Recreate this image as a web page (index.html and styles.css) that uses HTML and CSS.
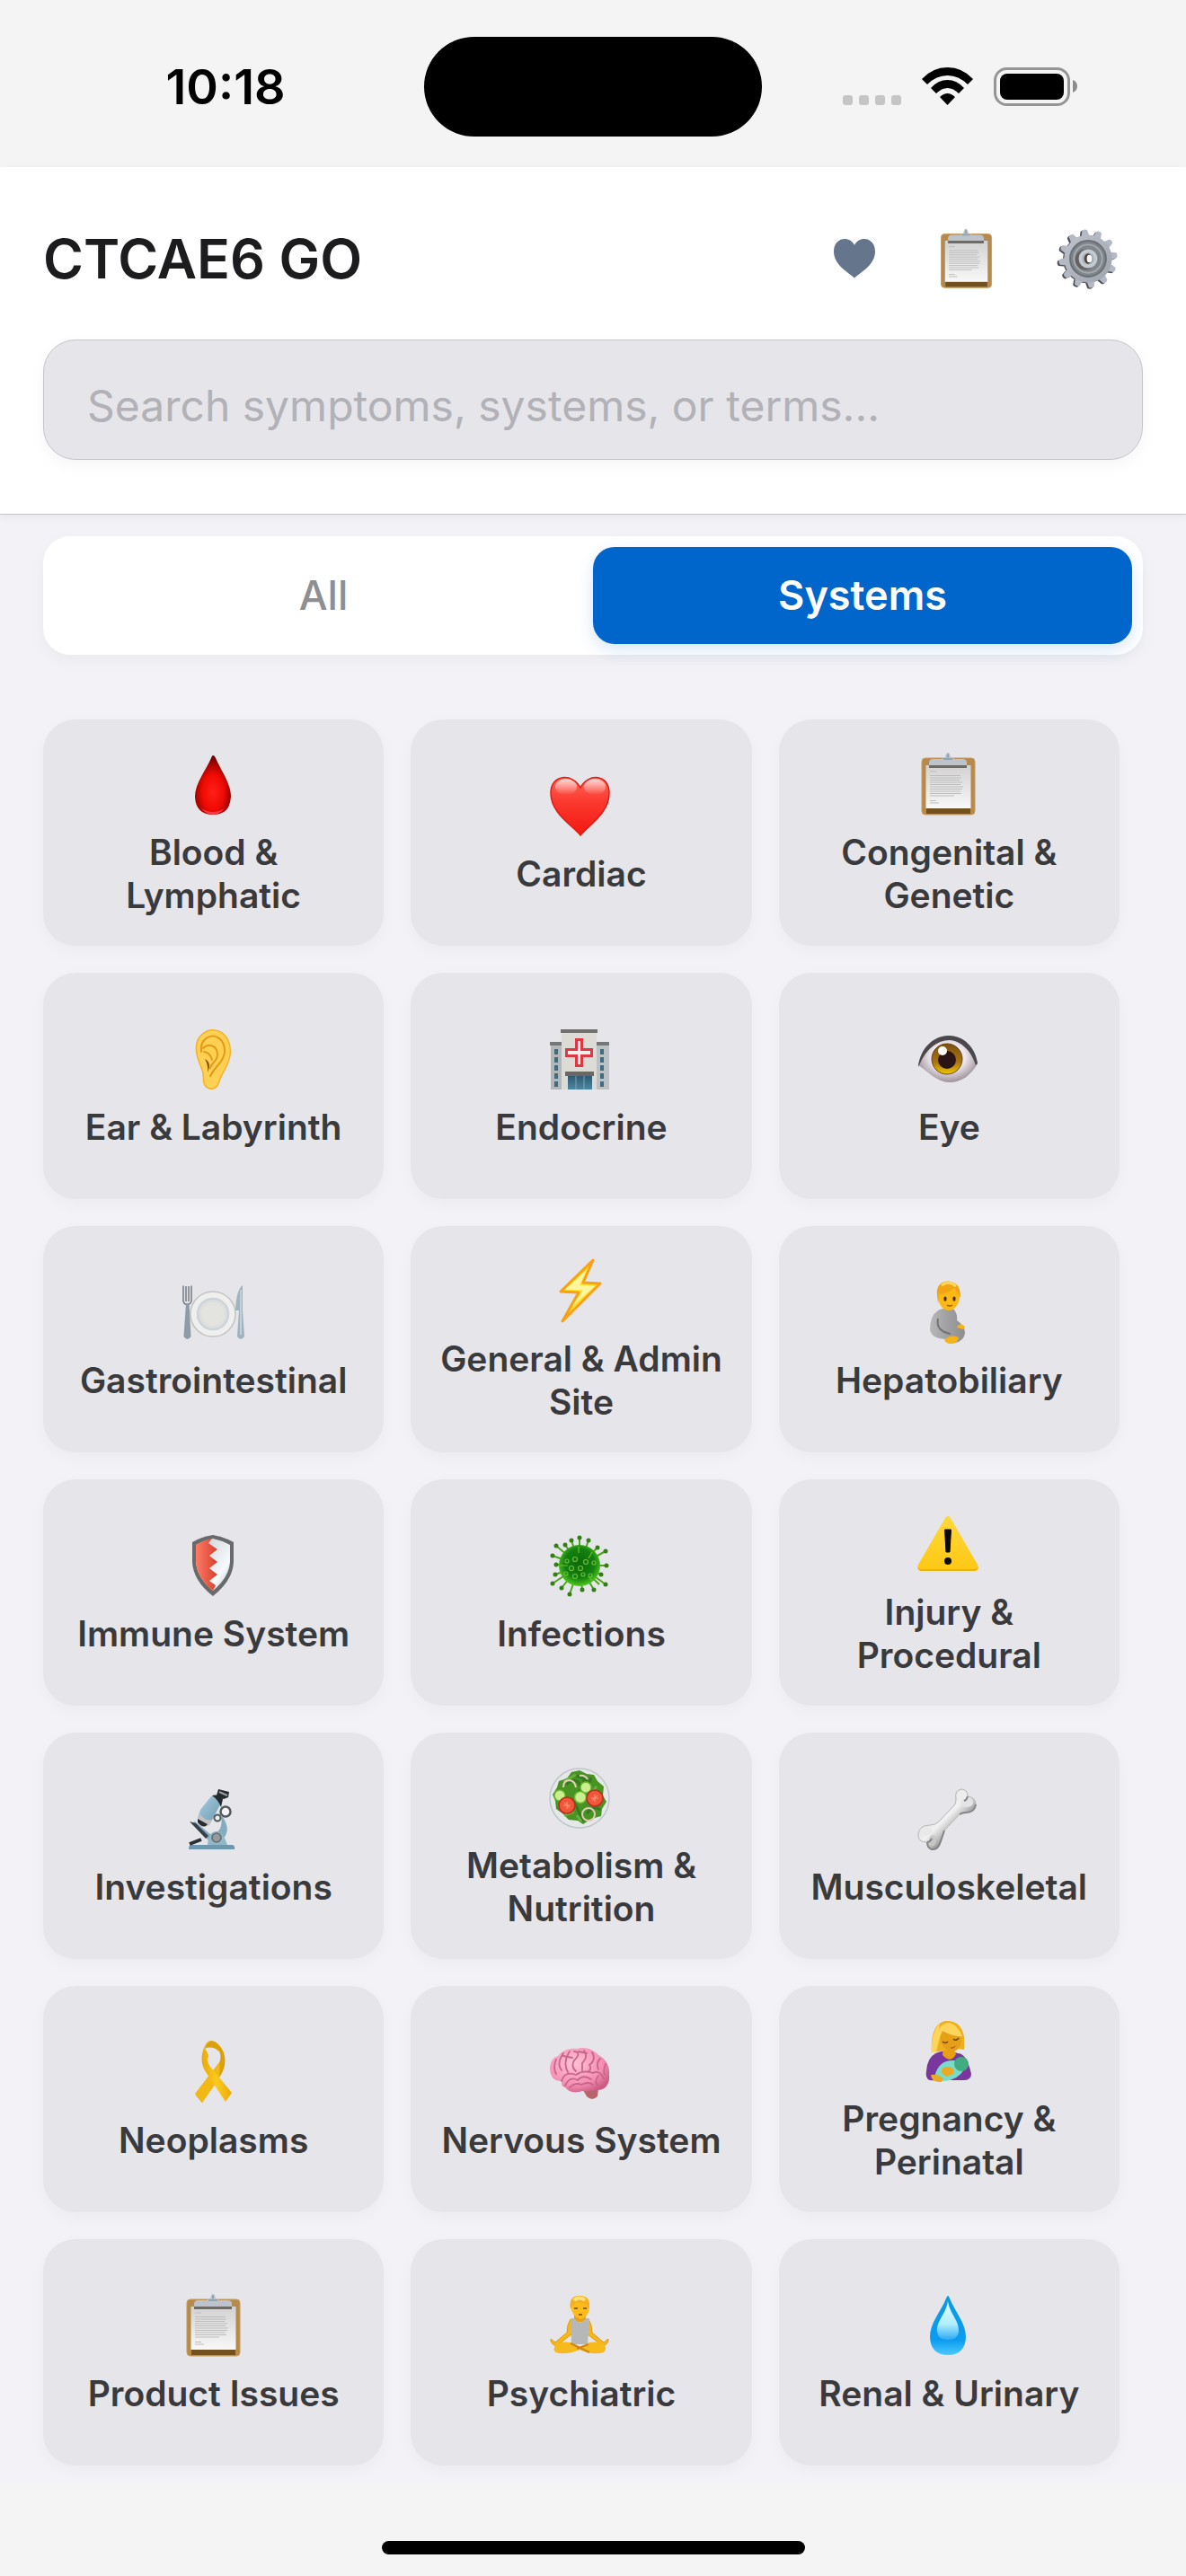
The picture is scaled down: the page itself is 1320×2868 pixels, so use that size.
FILE: index.html
```html
<!DOCTYPE html>
<html lang="en">
<head>
<meta charset="utf-8">
<meta name="viewport" content="width=device-width, initial-scale=1">
<title>CTCAE6 GO</title>
<link rel="stylesheet" href="styles.css">
</head>
<body>
<svg class="sprite" aria-hidden="true">
  <defs>
    <radialGradient id="g-blood" cx=".5" cy=".62" r=".6"><stop offset="0" stop-color="#ff2018"/><stop offset=".5" stop-color="#f00a04"/><stop offset="1" stop-color="#6c0000"/></radialGradient>
    <linearGradient id="g-heart" x2="0" y2="1"><stop offset="0" stop-color="#ff6a5c"/><stop offset=".4" stop-color="#fb3a30"/><stop offset="1" stop-color="#f3180f"/></linearGradient>
    <linearGradient id="g-shine" x2="0" y2="1"><stop offset="0" stop-color="#fff" stop-opacity=".75"/><stop offset="1" stop-color="#fff" stop-opacity="0"/></linearGradient>
    <linearGradient id="g-paper" x2="0" y2="1"><stop offset="0" stop-color="#d2d2d2"/><stop offset="1" stop-color="#f8f8f8"/></linearGradient>
    <linearGradient id="g-ribbon" x2="1" y2="0"><stop offset="0" stop-color="#e8a80c"/><stop offset=".5" stop-color="#fcca1e"/><stop offset="1" stop-color="#eaa908"/></linearGradient>
    <linearGradient id="g-warn" x2="0" y2="1"><stop offset="0" stop-color="#ffd83a"/><stop offset="1" stop-color="#ffc814"/></linearGradient>
    <linearGradient id="g-steel" x2="1" y2="1"><stop offset="0" stop-color="#bfc3cb"/><stop offset="1" stop-color="#9da3ae"/></linearGradient>
    <linearGradient id="g-glass" x2="0" y2="1"><stop offset="0" stop-color="#2f5a72"/><stop offset="1" stop-color="#4d87a3"/></linearGradient>
    <radialGradient id="g-eye" cx=".5" cy=".45" r=".6"><stop offset="0" stop-color="#fff"/><stop offset=".5" stop-color="#ece6ec"/><stop offset="1" stop-color="#8f8088"/></radialGradient>
    <linearGradient id="g-iris" x2="0" y2="1"><stop offset="0" stop-color="#7b5212"/><stop offset=".6" stop-color="#a87210"/><stop offset="1" stop-color="#f0c800"/></linearGradient>
    <linearGradient id="g-red" x2="1" y2="0"><stop offset="0" stop-color="#ff7a66"/><stop offset="1" stop-color="#d6402c"/></linearGradient>
    <linearGradient id="g-silver" x2="1" y2="1"><stop offset="0" stop-color="#c8ccd0"/><stop offset=".7" stop-color="#f6fafc"/><stop offset="1" stop-color="#b4bcc4"/></linearGradient>
    <radialGradient id="g-virus" cx=".5" cy=".45" r=".55"><stop offset="0" stop-color="#0e6a08"/><stop offset=".65" stop-color="#128010"/><stop offset="1" stop-color="#52c81c"/></radialGradient>
    <linearGradient id="g-scope" x2="1" y2="1"><stop offset="0" stop-color="#a8cfe2"/><stop offset="1" stop-color="#6c96ac"/></linearGradient>
    <linearGradient id="g-bone" gradientUnits="userSpaceOnUse" x1="28" y1="30" x2="50" y2="52"><stop offset="0" stop-color="#e2e2e2"/><stop offset=".4" stop-color="#f2f2f2"/><stop offset=".7" stop-color="#c4c4c4"/><stop offset="1" stop-color="#858585"/></linearGradient>
    <radialGradient id="g-brain" cx=".4" cy=".35" r=".7"><stop offset="0" stop-color="#ffc4d8"/><stop offset=".7" stop-color="#f48eb2"/><stop offset="1" stop-color="#cc5c84"/></radialGradient>
    <linearGradient id="g-shirt" x2="1" y2="0"><stop offset="0" stop-color="#b8b8ba"/><stop offset=".5" stop-color="#a0a0a2"/><stop offset="1" stop-color="#8e8e90"/></linearGradient>
    <linearGradient id="g-water" x2="0" y2="1"><stop offset="0" stop-color="#0a9ae4"/><stop offset=".75" stop-color="#0c9cf0"/><stop offset="1" stop-color="#4ccaff"/></linearGradient>
    <linearGradient id="g-waterlight" x2="0" y2="1"><stop offset="0" stop-color="#e4ffff"/><stop offset=".6" stop-color="#b0eeff"/><stop offset="1" stop-color="#2aaaf4"/></linearGradient>
    <path id="tooth" d="M35.500 13L37 6.500Q40 4.500 43 6.500L44.500 13Z"/>
    <g id="teeth">
      <use href="#tooth"/><use href="#tooth" transform="rotate(30 40 40)"/><use href="#tooth" transform="rotate(60 40 40)"/><use href="#tooth" transform="rotate(90 40 40)"/><use href="#tooth" transform="rotate(120 40 40)"/><use href="#tooth" transform="rotate(150 40 40)"/><use href="#tooth" transform="rotate(180 40 40)"/><use href="#tooth" transform="rotate(210 40 40)"/><use href="#tooth" transform="rotate(240 40 40)"/><use href="#tooth" transform="rotate(270 40 40)"/><use href="#tooth" transform="rotate(300 40 40)"/><use href="#tooth" transform="rotate(330 40 40)"/>
    </g>
  </defs>

  <symbol id="blood" viewBox="0 0 80 80"><path d="M39 8Q41 8 42 11C48 25 59 39 59 54Q58 74 39 74Q20 74 19 54C19 39 31 25 37 11Q38 8 39 8Z" fill="url(#g-blood)"/><path d="M26 67Q39 75 52 67Q46 74 39 74Q32 74 26 67Z" fill="#ff3a48"/></symbol>

  <symbol id="heart" viewBox="0 0 80 80"><path d="M39 73C29 61 6 48 6 26C6 5 30 3 39 20C48 3 71 5 71 26C71 48 49 61 39 73Z" fill="url(#g-heart)" stroke="#dd1c14" stroke-width="1.500"/><ellipse cx="23" cy="19" rx="12" ry="9" fill="url(#g-shine)"/><ellipse cx="55" cy="19" rx="12" ry="9" fill="url(#g-shine)"/></symbol>

  <symbol id="clipboard" viewBox="0 0 80 80">
    <rect x="10" y="11" width="59" height="63" rx="4" fill="#b58a4c" stroke="#c79c60"/>
    <path d="M15 67h49v6H15z" fill="#73501f"/><path d="M14.500 19h50v48h-50z" fill="url(#g-paper)"/>
    <path d="M18 19h42v3H18z" fill="#6e6a66"/>
    <path d="M18 19v-3q0-4 5-4h9l4-2q1-5 3-5t3 5l4 2h9q5 0 5 4v3z" fill="#bcc3ca"/><path d="M34 12h10M39 6.500v4" stroke="#8fa3b0" stroke-width="2"/>
    <path d="M19 26h7M19 30.500h34M19 33h35M19 35.500h33M19 38h36M19 40.500h34M19 43h37M19 45.500h36M19 48h34M19 50.500h35M19 53h27M19 58.500h7M19 61h10" stroke="#bdbdbd"/>
  </symbol>

  <symbol id="gear" viewBox="0 0 80 80">
    <g transform="rotate(-7 40 40)"><use href="#teeth" x="-2" y="1" fill="#4b4c52"/><circle cx="38.500" cy="40.500" r="28" fill="#55575e"/><use href="#teeth" fill="#b4bac5"/></g>
    <circle cx="40" cy="40" r="28" fill="url(#g-steel)"/><circle cx="40" cy="40" r="21" fill="#7e868c" stroke="#686f76" stroke-width="2"/><circle cx="40" cy="40" r="16.500" fill="none" stroke="#a4abb0" stroke-width="2"/><circle cx="37" cy="41" r="12" fill="#66605f"/><circle cx="40" cy="40" r="11" fill="#c2cad2"/><circle cx="40" cy="40" r="7" fill="#a7b0ba"/><ellipse cx="40" cy="40" rx="4.500" ry="6" fill="#4e4033"/><ellipse cx="41.500" cy="40" rx="3" ry="4.500" fill="#fff"/>
  </symbol>

  <symbol id="ear" viewBox="0 0 80 80"><path d="M21 34C17 14 33 7 41 8C53 9 60 22 58 36C56 50 48 56 46 65C44 72 39 75 33 72C27 69 29 62 28 56C27 49 22 43 21 34Z" fill="#ffd052" stroke="#f2b229" stroke-width="1.500"/><path d="M26 32C24 17 37 12 44 16C52 20 54 31 50 39C47 46 41 49 36 59M28 28C34 22 44 25 44 35C44 43 38 43 36 50M29 32Q36 33 38 41" fill="none" stroke="#e39a1a" stroke-width="2" stroke-linecap="round"/><path d="M30 40Q38 44 33 55Q34 47 30 40Z" fill="#8d4b04"/></symbol>

  <symbol id="hospital" viewBox="0 0 80 80">
    <path d="M6 24h14v50H6z" fill="#b4b7b7"/><path d="M57 24h14v50H57z" fill="#bcc2c4"/><path d="M5 21h14v4H5zM57 21h14v4H57z" fill="#777"/>
    <path d="M18 10h39v64H18z" fill="#dcdbd6"/><path d="M17 7h41v4H17z" fill="#716f6d"/>
    <path d="M10 29h4v6h-4zM10 38h4v6h-4zM10 47h4v6h-4zM10 56h4v6h-4zM10 65h4v6h-4zM61 29h4v6h-4zM61 38h4v6h-4zM61 47h4v6h-4zM61 56h4v6h-4zM61 65h4v6h-4z" fill="#416b80"/>
    <path d="M34.500 18.500h6v11h11v7h-11v11h-6v-11h-11v-7h11z" fill="#efeded" stroke="#e03842" stroke-width="3"/>
    <path d="M22 54h32v5H22z" fill="#6a6764"/><path d="M25 59h27v15H25z" fill="url(#g-glass)"/><path d="M34 59v15M43 59v15" stroke="#7fa6b6"/>
  </symbol>

  <symbol id="eye" viewBox="0 0 80 80"><path d="M6 47C10 27 25 14 40 14C56 14 68 26 72 45C65 58 54 66 41 66C27 66 17 54 6 47Z" fill="url(#g-eye)"/><path d="M6 49C8 28 23 14 40 14C57 14 70 28 72 45L70 47C65 31 54 20 41 19C26 19 14 31 8 45Z" fill="#4a484c"/><circle cx="38" cy="40" r="17" fill="url(#g-iris)" stroke="#664310"/><circle cx="38" cy="41" r="10" fill="#2a1516"/><circle cx="33" cy="31" r="5" fill="#fff"/></symbol>

  <symbol id="plate" viewBox="0 0 80 80"><circle cx="39" cy="42" r="25" fill="#efefee" stroke="#c2c4c4" stroke-width="1.500"/><circle cx="39" cy="42" r="17" fill="#dedfdc" stroke="#ccd3da" stroke-width="2.500"/><circle cx="39" cy="42" r="13" fill="#e3e3df"/><path d="M6 10.500v17q1 4 4.500 4q4-1 4.500-4v-17M9 11v17M12 11v17" fill="none" stroke="#747a82" stroke-width="1.500"/><path d="M9 30h3.500l2 37q-4 6-8 0z" fill="#8d9ba8"/><path d="M72 10Q65 15 64 38H68L66 67Q70 73 74 67L72 38Z" fill="#9fb4be"/><path d="M70 15v50" stroke="#ccdbe1" stroke-width="1.500"/></symbol>

  <symbol id="bolt" viewBox="0 0 80 80"><path d="M53 6L17 41L37 42L19 74L61 32L42 31Z" fill="#ffe02e" stroke="#f8a016" stroke-width="3" stroke-linejoin="round"/><path d="M46 17L22 38.500L42 39.500L30 57L55 35L38 34Z" fill="#fff7a0"/></symbol>

  <symbol id="pregnant" viewBox="0 0 80 80"><path d="M28 38Q35 34 46 37Q50 43 49 49Q58 55 58 63Q57 72 47 74Q39 76 36 70Q20 69 19 59Q19 44 28 38Z" fill="url(#g-shirt)"/><path d="M28 47Q25 61 42 64" fill="none" stroke="#747477" stroke-width="2"/><ellipse cx="40" cy="22" rx="12" ry="16" fill="#fbb917"/><path d="M27 21C25 6 38 3 45 7Q53 9 53 24Q49 17 46 13Q39 20 29 20L28 31Z" fill="#f2a512"/><path d="M32 10Q40 4 48 11" fill="none" stroke="#ffd75a" stroke-width="3"/><path d="M36 24v2M46 24v2" stroke="#4b2a08" stroke-width="3" stroke-linecap="round"/><path d="M38 32q3 2 6 0" fill="none" stroke="#984810" stroke-width="1.500"/><path d="M35 71Q42 64 51 68Q50 75 42 75Q37 75 35 71ZM49 57Q52 50 58 56L56 59Z" fill="#f6b419"/></symbol>

  <symbol id="shield" viewBox="0 0 80 80"><path d="M39 6Q52 8 62 14V36Q61 57 39 74Q17 57 16 36V14Q26 8 39 6Z" fill="#686a6c"/><path d="M39 10Q49 12 58 17V36Q57 53 39 68Q21 53 20 36V17Q29 12 39 10Z" fill="url(#g-silver)"/><path d="M38 10L34 15L44 22L35 29L44 36L35 43L44 50L35 57L42 62L39 68Q21 53 20 36V17Q29 12 38 10Z" fill="url(#g-red)"/></symbol>

  <symbol id="virus" viewBox="0 0 80 80">
    <path d="M38 40V9M38 40L29 12M38 40L48 12M38 40L22 17M38 40L12 18M38 40L58 20M38 40L67 24M38 40L8 29M38 40L68 40M38 40L12 39M38 40L11 50M38 40L62 50M38 40L67 61M38 40L8 60M38 40L18 65M38 40L27 72M38 40L41 67M38 40L54 67M38 40L60 61" stroke="#49a51a" stroke-width="2" fill="none"/>
    <path d="M38 9h0M29 12h0M48 12h0M22 17h0M12 18h0M58 20h0M67 24h0M8 29h0M68 40h0M12 39h0M11 50h0M62 50h0M67 61h0M8 60h0M18 65h0M27 72h0M41 67h0M54 67h0" stroke="#337f14" stroke-width="5" stroke-linecap="round"/>
    <circle cx="38" cy="40" r="23" fill="url(#g-virus)"/><g fill="none" stroke="#6cbc3c" stroke-width="1.200"><circle cx="33" cy="33" r="2.500"/><circle cx="45" cy="36" r="2.500"/><circle cx="29" cy="43" r="2.500"/><circle cx="39" cy="43" r="2.500"/><circle cx="33" cy="52" r="2.500"/><circle cx="42" cy="50" r="2"/><circle cx="54" cy="37" r="2"/><circle cx="24" cy="35" r="2"/><circle cx="23" cy="49" r="2"/><circle cx="50" cy="51" r="2"/><path d="M37 19v7M48 32l4-7M16 40h9M52 57l-4-5"/></g>
  </symbol>

  <symbol id="warning" viewBox="0 0 80 80"><path d="M36 11Q39 7 42 11L72 63Q75 70 68 70H10Q3 70 6 63Z" fill="url(#g-warn)"/><path d="M6 66Q6 70 10 70H68Q72 70 73 66Q71 68 68 68H10Q7 68 6 66Z" fill="#edb210"/><path d="M35.500 24h7l-1.500 25h-4z" fill="#0a0a0a" stroke="#0a0a0a" stroke-linejoin="round"/><circle cx="39" cy="59" r="4" fill="#0a0a0a"/></symbol>

  <symbol id="microscope" viewBox="0 0 80 80"><path d="M50 38Q61 55 47 65H35L16 45L19 43L36 57Q51 56 48 38Z" fill="#83adbf"/><path d="M13 43L20 45L34 59L31 62Z" fill="#354048"/><path d="M37 15Q46 12 50 19L36 45Q31 50 22 39L25 30Z" fill="url(#g-scope)"/><path d="M24 34Q30 43 38 41L35 47Q29 51 22 41Z" fill="#c2c2c2"/><path d="M22 40L33 46L31 48Q27 50 22 44Z" fill="#292c2e"/><path d="M38 14Q46 12 50 18L48 27Q45 19 38 14ZM45 7L57 10L56 16L51 18L43 14Z" fill="#242a2e"/><path d="M46 10l9 4" stroke="#9aa0a4" stroke-width="2"/><circle cx="53" cy="32" r="5.500" fill="#f4f4f4" stroke="#50585c" stroke-width="2.500"/><circle cx="44" cy="39" r="3.500" fill="#eee" stroke="#50585c" stroke-width="2"/><path d="M33 69Q34 54 43 54Q50 54 55 69Z" fill="#91b8c8"/><circle cx="43" cy="61" r="5" fill="#98999a" stroke="#636b70" stroke-width="1.500"/><path d="M14 69H61Q64 70 63 74H12Q12 70 14 69Z" fill="#6e98ad"/><path d="M13 68l13-5" stroke="#2c3032" stroke-width="4"/></symbol>

  <symbol id="salad" viewBox="0 0 80 80"><circle cx="38" cy="41" r="33" fill="#e5e8e8" stroke="#bfc6c7" stroke-width="1.500"/><path d="M29 12L38 10L46 14L54 15L58 22L65 28L64 38L68 45L63 53L62 61L51 64L42 70L36 66L26 65L19 58L12 53L11 44L8 37L13 29L15 22L24 19Z" fill="#489422"/><path d="M23 26Q34 16 39 27T51 18M18 46Q29 36 35 51T44 66M46 43Q56 52 60 42M27 18Q37 13 47 23M46 58Q55 48 61 54M36 35Q43 29 43 20" fill="none" stroke="#357a1e" stroke-width="3"/><path d="M20 22L34 15M57 28L50 37M21 60L32 56M35 60l5 7" stroke="#6bb03c" stroke-width="3"/><g fill="#c9ef8e" stroke="#6fb535" stroke-width="1.500"><circle cx="16" cy="38" r="6"/><circle cx="39" cy="40" r="6.500"/><circle cx="45" cy="29" r="6"/></g><g fill="#ef563a" stroke="#ba2c1c" stroke-width="1.500"><circle cx="24" cy="49" r="9"/><circle cx="55" cy="41" r="9"/></g><path d="M24 45v8M20 49h8M21 46l6 6M55 37v8M51 41h8M52 44l6-6" stroke="#ff9c7c"/><path d="M20 29Q20 21 27 21Q33 22 34 29M38 16Q44 15 47 20" fill="none" stroke="#e6cfc0" stroke-width="2"/><circle cx="48" cy="59" r="7" fill="none" stroke="#e2c8bc" stroke-width="2"/></symbol>

  <symbol id="bone" viewBox="0 0 80 80"><path d="M48 18Q46 8 54 7Q61 7 61 15Q70 16 70 24Q69 33 59 33Q55 33 52 35L35 53Q34 57 31 65Q28 75 21 74Q16 72 16 66Q5 66 6 57Q7 47 19 47Q25 47 29 43L46 25Q48 22 48 18Z" fill="url(#g-bone)" stroke="#b6b6b6"/><ellipse cx="54" cy="14" rx="5" ry="5" fill="#ededed"/><ellipse cx="60" cy="22" rx="7" ry="5" fill="#e4e4e4"/><ellipse cx="15" cy="54" rx="7" ry="5" fill="#e9e9e9"/><ellipse cx="22" cy="64" rx="4" ry="6" fill="#c6c6c6"/><path d="M16 66Q16 72 21 74Q28 75 31 65L35 53M16 66Q19 66 21 62M70 24Q69 33 59 33Q55 33 52 35M61 15Q60 19 57 20" fill="none" stroke="#858585" stroke-width="2"/></symbol>

  <symbol id="ribbon" viewBox="0 0 80 80"><path d="M30 14Q38 10 46 17Q49 22 46 30L20 66L27 74L48 43Q55 31 51 18Q46 7 38 5Q32 5 30 14Z" fill="#dca008"/><path d="M19 64L46 29Q47 36 46 47L27 74Z" fill="#f2b916"/><path d="M30 14Q34 18 34 23Q31 26 36 34L60 63L53 73L31 40Q24 29 28 16Q31 6 36 5Q31 9 30 14Z" fill="url(#g-ribbon)"/></symbol>

  <symbol id="brain" viewBox="0 0 80 80"><path d="M42 60Q50 52 59 58L58 67Q52 73 46 67Z" fill="#b9626c"/><path d="M5 37C5 29 8 24 14 22C19 15 28 13 35 14C44 11 54 15 59 21C67 25 72 33 71 43C72 54 66 61 57 60C50 61 47 62 41 61C32 64 26 62 22 57C18 56 18 53 18 50C10 50 6 46 5 37Z" fill="url(#g-brain)"/><path d="M12 26Q8 35 12 42M20 19Q12 31 18 38M27 17Q19 29 25 40M32 17Q41 18 32 27Q28 34 34 39M43 16Q48 23 41 30V38M52 18Q57 26 49 32Q52 37 47 40M61 25Q56 30 59 37M67 31Q64 38 66 43M18 50Q22 38 34 43Q43 37 53 41Q60 37 65 47M22 55Q27 44 36 49Q42 42 51 48M27 57Q34 51 40 54Q48 50 53 54M59 44Q53 52 60 56M20 22L30 24M37 17L46 19" fill="none" stroke="#c9648a" stroke-width="1.800" stroke-linecap="round"/></symbol>

  <symbol id="nursing" viewBox="0 0 80 80"><path d="M28 42Q38 38 50 43Q60 43 65 66Q65 74 54 73H25Q13 75 15 63Q16 46 28 42Z" fill="#79379d"/><path d="M34 37h11l3 7q-6 11-15 1z" fill="#e89f13"/><path d="M21 42C20 23 24 8 38 7Q54 7 57 25V39L51 38L28 41Z" fill="#edb01c"/><path d="M30 26Q29 14 42 14Q54 20 54 29Q53 40 43 42Q33 40 30 26Z" fill="#e5a018"/><path d="M28 24Q28 10 40 9Q49 10 55 24Q45 25 33 18Q29 26 26 42L21 42Q20 20 30 10Z" fill="#ffd45a"/><path d="M33 30q3 3 6 0M45 27q3 3 6-1" fill="none" stroke="#734009" stroke-width="1.500"/><path d="M42 37q4 1 5-2" stroke="#934913" fill="none"/><path d="M25 66Q30 50 46 51L58 60Q50 73 35 74Q23 72 25 66Z" fill="#77dccb"/><circle cx="54" cy="55" r="8" fill="#43ab80"/><path d="M32 65Q31 57 39 58Q47 58 45 66L37 69ZM20 67Q28 66 34 71L32 75Q21 76 20 67Z" fill="#ecaa22"/></symbol>

  <symbol id="meditate" viewBox="0 0 80 80"><path d="M28 33Q24 39 24 48L11 59L6 55Q5 60 12 63L29 50L35 35ZM48 33Q52 39 52 48L65 59L70 55Q71 60 64 63L47 50L41 35Z" fill="#f7b718" stroke="#e3990e"/><path d="M32 26h13v10H32z" fill="#ed9f0b"/><path d="M28 33Q31 31 33 33Q39 40 44 33Q47 31 49 33L47 61H29Z" fill="#b6b7b9"/><path d="M10 64Q15 57 28 59L39 64L49 59Q62 57 67 64Q68 71 60 71Q48 72 38 67Q28 72 15 71Q8 70 10 64Z" fill="#f8b91c"/><path d="M28 60L49 70M48 61L35 66" stroke="#ce8711" stroke-width="2" fill="none"/><path d="M28 18Q27 7 38 7Q50 7 49 18Q49 31 39 33Q30 31 28 18Z" fill="#fbbb1a"/><path d="M28 22Q25 8 38 7Q50 8 49 22L45 16L35 14L30 18Z" fill="#f4b024"/><path d="M32 12Q38 7 44 12" stroke="#ffe079" stroke-width="4" fill="none"/><path d="M32 21h4M42 21h4M37 28h4" stroke="#794306" stroke-width="1.500"/></symbol>

  <symbol id="water" viewBox="0 0 80 80"><path d="M39 7Q40 7 41 10C47 25 59 37 59 53Q58 73 39 73Q20 73 19 53C19 37 31 25 37 10Q38 7 39 7Z" fill="url(#g-water)"/><path d="M39 13C41 27 52 35 51 47Q50 56 39 56Q28 56 27 47C26 35 37 27 39 13Z" fill="url(#g-waterlight)"/></symbol>
</svg>

<div class="app">
  <div class="status">
    <div class="status-left"><span class="time">10:18</span></div>
    <div class="island"></div>
    <div class="status-right">
      <svg class="signals" viewBox="0 0 264 48" role="img" aria-label="No cellular signal, Wi-Fi on, battery full">
        <g fill="#c5c5c5"><rect x="1" y="33" width="11" height="11" rx="3"/><rect x="19" y="33" width="11" height="11" rx="3"/><rect x="37" y="33" width="11" height="11" rx="3"/><rect x="55" y="33" width="11" height="11" rx="3"/></g>
        <path d="M89 15Q101 2 117.500 2T146 15L140 21Q130 11 117.500 11T95 21ZM99 25Q107 16 117.500 16T136 25L130 31Q124 25 117.500 25T105 31ZM109 35Q117.500 27 126 35L117.500 44Z"/>
        <rect x="170.500" y="3.500" width="82" height="40" rx="13" fill="none" stroke="#959595" stroke-width="3"/><rect x="176" y="9" width="71" height="29" rx="8"/><path d="M257 16q5 2 5 7t-5 7z" fill="#8c8c8c"/>
      </svg>
    </div>
  </div>

  <header class="header">
    <div class="title-row">
      <h1 class="title">CTCAE6 GO</h1>
      <div class="actions">
        <button class="action action-small" type="button" aria-label="Favorites"><svg class="favorite" viewBox="0 0 46 44"><path d="M23 43.500C16 37 0 29 0 14C0-2 18-4 23 7C28-4 46-2 46 14C46 29 30 37 23 43.500Z" fill="#64758c"/></svg></button>
        <button class="action" type="button" aria-label="Reports"><svg class="action-icon" viewBox="0 0 80 80"><use href="#clipboard"/></svg></button>
        <button class="action" type="button" aria-label="Settings"><svg class="action-icon" viewBox="0 0 80 80"><use href="#gear"/></svg></button>
      </div>
    </div>
    <input class="search" type="search" aria-label="Search" placeholder="Search symptoms, systems, or terms...">
  </header>

  <main class="content">
    <div class="tabs">
      <button class="tab" type="button">All</button>
      <button class="tab tab-active" type="button" aria-pressed="true">Systems</button>
    </div>
    <div class="grid">
      <button class="card" type="button"><svg class="icon"><use href="#blood"/></svg><span>Blood &amp; Lymphatic</span></button>
      <button class="card" type="button"><svg class="icon"><use href="#heart"/></svg><span>Cardiac</span></button>
      <button class="card" type="button"><svg class="icon"><use href="#clipboard"/></svg><span>Congenital &amp; Genetic</span></button>
      <button class="card" type="button"><svg class="icon"><use href="#ear"/></svg><span>Ear &amp; Labyrinth</span></button>
      <button class="card" type="button"><svg class="icon"><use href="#hospital"/></svg><span>Endocrine</span></button>
      <button class="card" type="button"><svg class="icon"><use href="#eye"/></svg><span>Eye</span></button>
      <button class="card" type="button"><svg class="icon"><use href="#plate"/></svg><span>Gastrointestinal</span></button>
      <button class="card" type="button"><svg class="icon"><use href="#bolt"/></svg><span>General &amp; Admin Site</span></button>
      <button class="card" type="button"><svg class="icon"><use href="#pregnant"/></svg><span>Hepatobiliary</span></button>
      <button class="card" type="button"><svg class="icon"><use href="#shield"/></svg><span>Immune System</span></button>
      <button class="card" type="button"><svg class="icon"><use href="#virus"/></svg><span>Infections</span></button>
      <button class="card" type="button"><svg class="icon"><use href="#warning"/></svg><span>Injury &amp; Procedural</span></button>
      <button class="card" type="button"><svg class="icon"><use href="#microscope"/></svg><span>Investigations</span></button>
      <button class="card" type="button"><svg class="icon"><use href="#salad"/></svg><span>Metabolism &amp; Nutrition</span></button>
      <button class="card" type="button"><svg class="icon"><use href="#bone"/></svg><span>Musculoskeletal</span></button>
      <button class="card" type="button"><svg class="icon"><use href="#ribbon"/></svg><span>Neoplasms</span></button>
      <button class="card" type="button"><svg class="icon"><use href="#brain"/></svg><span>Nervous System</span></button>
      <button class="card" type="button"><svg class="icon"><use href="#nursing"/></svg><span>Pregnancy &amp; Perinatal</span></button>
      <button class="card" type="button"><svg class="icon"><use href="#clipboard"/></svg><span>Product Issues</span></button>
      <button class="card" type="button"><svg class="icon"><use href="#meditate"/></svg><span>Psychiatric</span></button>
      <button class="card" type="button"><svg class="icon"><use href="#water"/></svg><span>Renal &amp; Urinary</span></button>
    </div>
  </main>

  <div class="home"><div class="home-bar"></div></div>
</div>
</body>
</html>
```
FILE: styles.css
```css
* {
  box-sizing: border-box;
}

body {
  margin: 0;
  background: #f4f4f4;
  font-family: Inter, "Liberation Sans", sans-serif;
}

button {
  border: 0;
  padding: 0;
  background: none;
  font: inherit;
}

.sprite {
  position: absolute;
  width: 0;
  height: 0;
}

.app {
  display: flex;
  flex-direction: column;
  min-height: 100vh;
}

/* Phone status bar */
.status {
  display: grid;
  grid-template-columns: 1fr 376px 1fr;
  align-items: center;
  padding: 41px 0 34px;
}

.status-left,
.status-right {
  display: flex;
  justify-content: center;
}

.status-left {
  padding-left: 30px;
}

.status-right {
  padding-right: 30px;
}

.time {
  font-size: 54px;
  font-weight: 600;
  line-height: 60px;
}

.island {
  height: 111px;
  border-radius: 56px;
  background: #000;
}

.signals {
  width: 264px;
  height: 48px;
}

/* Header */
.header {
  position: relative;
  display: flex;
  flex-direction: column;
  gap: 36px;
  padding: 48px 48px 60px;
  border-bottom: 1px solid #c6c6ca;
  background: #fff;
  box-shadow: 0 3px 9px rgba(0, 0, 0, 0.05);
}

.title-row {
  display: flex;
  align-items: center;
  justify-content: space-between;
  height: 108px;
}

.title {
  margin: 0;
  color: #1c1c1e;
  font-size: 61px;
  font-weight: 600;
  line-height: 72px;
}

.actions {
  display: flex;
  gap: 12px;
}

.action {
  display: flex;
  align-items: center;
  justify-content: center;
  width: 123px;
  height: 108px;
}

.action-small {
  width: 103px;
}

.action-icon {
  width: 76px;
  height: 76px;
}

.favorite {
  width: 46px;
  height: 44px;
}

.search {
  width: 100%;
  height: 134px;
  padding: 12px 48px 0;
  border: 1px solid #c6c6ca;
  border-radius: 36px;
  background: #e5e5ea;
  box-shadow: 0 6px 18px rgba(0, 0, 0, 0.04);
  color: #1c1c1e;
  font: 400 48px/60px Inter, "Liberation Sans", sans-serif;
  appearance: none;
}

.search::placeholder {
  color: #b1b1b7;
  opacity: 1;
}

/* Tabs and category grid */
.content {
  display: flex;
  flex-direction: column;
  flex: 1;
  gap: 72px;
  padding: 24px 48px 21px;
  background: #f2f2f7;
}

.tabs {
  display: flex;
  padding: 12px;
  border-radius: 30px;
  background: #fff;
  box-shadow: 0 6px 18px rgba(0, 0, 0, 0.04);
}

.tab {
  flex: 1;
  height: 108px;
  border-radius: 24px;
  color: #8e8e93;
  font-size: 45px;
  font-weight: 500;
  line-height: 54px;
}

.tab-active {
  background: #0066cc;
  box-shadow: 0 6px 18px rgba(0, 102, 204, 0.16);
  color: #fff;
  font-weight: 600;
}

.grid {
  display: grid;
  grid-template-columns: repeat(3, 1fr);
  gap: 30px;
  padding-right: 26px;
}

.card {
  display: flex;
  flex-direction: column;
  align-items: center;
  justify-content: center;
  gap: 12px;
  min-height: 252px;
  padding: 24px;
  border-radius: 36px;
  background: #e5e5ea;
  box-shadow: 0 6px 18px rgba(0, 0, 0, 0.03);
  color: #3a3a3c;
  font-size: 39px;
  font-weight: 600;
  line-height: 48px;
  text-align: center;
}

.icon {
  width: 80px;
  height: 80px;
}

.home {
  display: flex;
  justify-content: center;
  padding: 63px 0 24px;
}

.home-bar {
  width: 471px;
  height: 15px;
  border-radius: 8px;
  background: #000;
}
```
